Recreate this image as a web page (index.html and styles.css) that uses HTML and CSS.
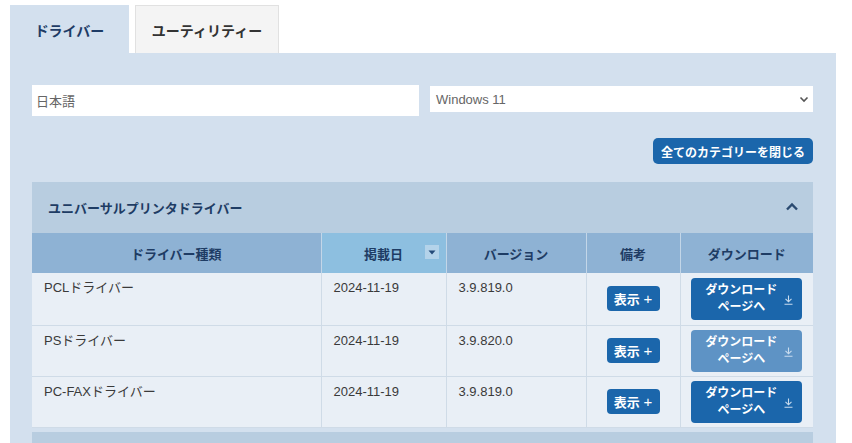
FILE: index.html
```html
<!DOCTYPE html>
<html lang="ja">
<head>
<meta charset="utf-8">
<title>ドライバー</title>
<link rel="stylesheet" href="styles.css">
</head>
<body>
<div class="tabs">
  <div class="tab tab-active">ドライバー</div>
  <div class="tab">ユーティリティー</div>
</div>
<div class="panel">
  <div class="filters">
    <div class="field field-input">日本語</div>
    <div class="field field-select">
      <span>Windows 11</span>
      <svg class="select-caret" width="10" height="7" viewBox="0 0 10 7"><path d="M1.5 1.5 L5 5 L8.5 1.5" fill="none" stroke="#555" stroke-width="1.6"/></svg>
    </div>
  </div>
  <div class="actions">
    <button class="btn btn-close-all">全てのカテゴリーを閉じる</button>
  </div>
  <div class="section">
    <div class="section-head">
      <span>ユニバーサルプリンタドライバー</span>
      <svg class="chev" width="14" height="9" viewBox="0 0 14 9"><path d="M2 7.5 L7 2.5 L12 7.5" fill="none" stroke="#2a4a70" stroke-width="2.4"/></svg>
    </div>
    <table class="drivers">
      <colgroup>
        <col class="c1"><col class="c2"><col class="c3"><col class="c4"><col class="c5">
      </colgroup>
      <thead>
        <tr>
          <th>ドライバー種類</th>
          <th class="sorted">掲載日<span class="sort-ic"><svg width="8" height="5" viewBox="0 0 8 5"><path d="M0.5 0.5 H7.5 L4 4.5 Z" fill="#244a78"/></svg></span></th>
          <th>バージョン</th>
          <th>備考</th>
          <th>ダウンロード</th>
        </tr>
      </thead>
      <tbody>
        <tr class="r1">
          <td>PCLドライバー</td>
          <td>2024-11-19</td>
          <td>3.9.819.0</td>
          <td class="mid"><button class="btn btn-show">表示 <span class="plus">+</span></button></td>
          <td class="mid"><button class="btn btn-dl"><span class="dl-text">ダウンロード<br>ページへ</span><svg class="dl-ic" width="9" height="10" viewBox="0 0 9 10"><path d="M4.5 0.5 V6.5 M1.5 3.8 L4.5 6.8 L7.5 3.8 M0.5 9.2 H8.5" fill="none" stroke="#c9dcef" stroke-width="1.1"/></svg></button></td>
        </tr>
        <tr>
          <td>PSドライバー</td>
          <td>2024-11-19</td>
          <td>3.9.820.0</td>
          <td class="mid"><button class="btn btn-show">表示 <span class="plus">+</span></button></td>
          <td class="mid"><button class="btn btn-dl btn-dl-light"><span class="dl-text">ダウンロード<br>ページへ</span><svg class="dl-ic" width="9" height="10" viewBox="0 0 9 10"><path d="M4.5 0.5 V6.5 M1.5 3.8 L4.5 6.8 L7.5 3.8 M0.5 9.2 H8.5" fill="none" stroke="#c9dcef" stroke-width="1.1"/></svg></button></td>
        </tr>
        <tr>
          <td>PC-FAXドライバー</td>
          <td>2024-11-19</td>
          <td>3.9.819.0</td>
          <td class="mid"><button class="btn btn-show">表示 <span class="plus">+</span></button></td>
          <td class="mid"><button class="btn btn-dl"><span class="dl-text">ダウンロード<br>ページへ</span><svg class="dl-ic" width="9" height="10" viewBox="0 0 9 10"><path d="M4.5 0.5 V6.5 M1.5 3.8 L4.5 6.8 L7.5 3.8 M0.5 9.2 H8.5" fill="none" stroke="#c9dcef" stroke-width="1.1"/></svg></button></td>
        </tr>
      </tbody>
    </table>
  </div>
  <div class="section section-next">
    <div class="section-head"></div>
  </div>
</div>
</body>
</html>
```

FILE: styles.css
```css
html, body {
  margin: 0;
  padding: 0;
  background: #ffffff;
  overflow: hidden;
}
body {
  font-family: "Liberation Sans", "Noto Sans CJK JP", sans-serif;
  font-size: 13px;
  color: #333333;
}
.tabs {
  display: flex;
  gap: 6px;
  padding: 5px 0 0 10px;
  height: 48px;
}
.tab {
  box-sizing: border-box;
  height: 48px;
  display: flex;
  align-items: center;
  justify-content: center;
  font-weight: bold;
  font-size: 14px;
  color: #333333;
  background: #f4f4f4;
  border: 1px solid #e1e1e1;
  border-bottom: none;
  width: 144px;
}
.tab-active {
  width: 119px;
  background: #d3e0ee;
  border-color: #d3e0ee;
  color: #1e3c66;
}
.panel {
  background: #d3e0ee;
  margin: 0 16px 0 10px;
  padding: 32px 23px 0 22px;
  height: 400px;
}
.filters {
  display: grid;
  grid-template-columns: 387px 1fr;
  column-gap: 11px;
  align-items: start;
}
.field {
  box-sizing: border-box;
  background: #ffffff;
  color: #666666;
  font-size: 13px;
  display: flex;
  align-items: center;
}
.field-input {
  height: 31px;
  padding-left: 4px;
}
.field-select {
  height: 26px;
  margin-top: 1px;
  padding: 0 4px 0 6px;
  justify-content: space-between;
}
.actions {
  display: flex;
  justify-content: flex-end;
  margin-top: 22px;
}
.btn {
  font-family: "Liberation Sans", "Noto Sans CJK JP", sans-serif;
  border: none;
  color: #ffffff;
  background: #1b66ab;
  font-weight: bold;
  cursor: pointer;
  padding: 0;
}
.btn-close-all {
  height: 26px;
  width: 160px;
  border-radius: 5px;
  font-size: 12px;
}
.section {
  margin-top: 18px;
}
.section-head {
  height: 51px;
  background: #b8cde0;
  display: flex;
  align-items: center;
  justify-content: space-between;
  padding: 0 14px 0 16px;
  font-weight: bold;
  font-size: 13px;
  color: #1e3c64;
}
.chev {
  margin-top: -2px;
}
.drivers {
  width: 100%;
  border-collapse: collapse;
  table-layout: fixed;
}
.c1 { width: 289px; }
.c2 { width: 125px; }
.c3 { width: 140px; }
.c4 { width: 94px; }
.c5 { width: 133px; }
.drivers th {
  height: 40px;
  padding: 0;
  background: #8eb2d4;
  color: #1e3c64;
  font-size: 13px;
  font-weight: bold;
  text-align: center;
  border-left: 1px solid #c3d6e8;
  position: relative;
}
.drivers th:first-child {
  border-left: none;
}
.drivers th.sorted {
  background: #8dbfe0;
}
.sort-ic {
  position: absolute;
  right: 7px;
  top: 12px;
  width: 14px;
  height: 14px;
  background: #b4d3ea;
  display: flex;
  align-items: center;
  justify-content: center;
}
.drivers td {
  background: #e9eff6;
  border: 1px solid #cfdbe7;
  border-top: none;
  vertical-align: top;
  padding: 7px 12px 0 12px;
  height: 51px;
  box-sizing: border-box;
  font-size: 13px;
  color: #3a3a3a;
  line-height: 16px;
}
.drivers tr.r1 td {
  height: 52px;
}
.drivers td:first-child {
  border-left: none;
}
.drivers td:last-child {
  border-right: none;
}
.drivers td.mid {
  vertical-align: middle;
  text-align: center;
  padding: 0;
}
.btn-show {
  width: 53px;
  height: 25px;
  border-radius: 4px;
  font-size: 13px;
  vertical-align: middle;
}
.plus {
  font-weight: normal;
  font-size: 15px;
}
.btn-dl {
  width: 111px;
  height: 42px;
  border-radius: 4px;
  font-size: 12px;
  line-height: 17px;
  display: inline-flex;
  align-items: center;
  justify-content: flex-start;
  padding-left: 14px;
  vertical-align: middle;
}
.btn-dl-light {
  background: #5e93c5;
}
.dl-text {
  white-space: nowrap;
  text-align: center;
}
.dl-ic {
  margin-left: 7px;
  margin-top: 2px;
}
.section-next {
  margin-top: 4px;
}
```
